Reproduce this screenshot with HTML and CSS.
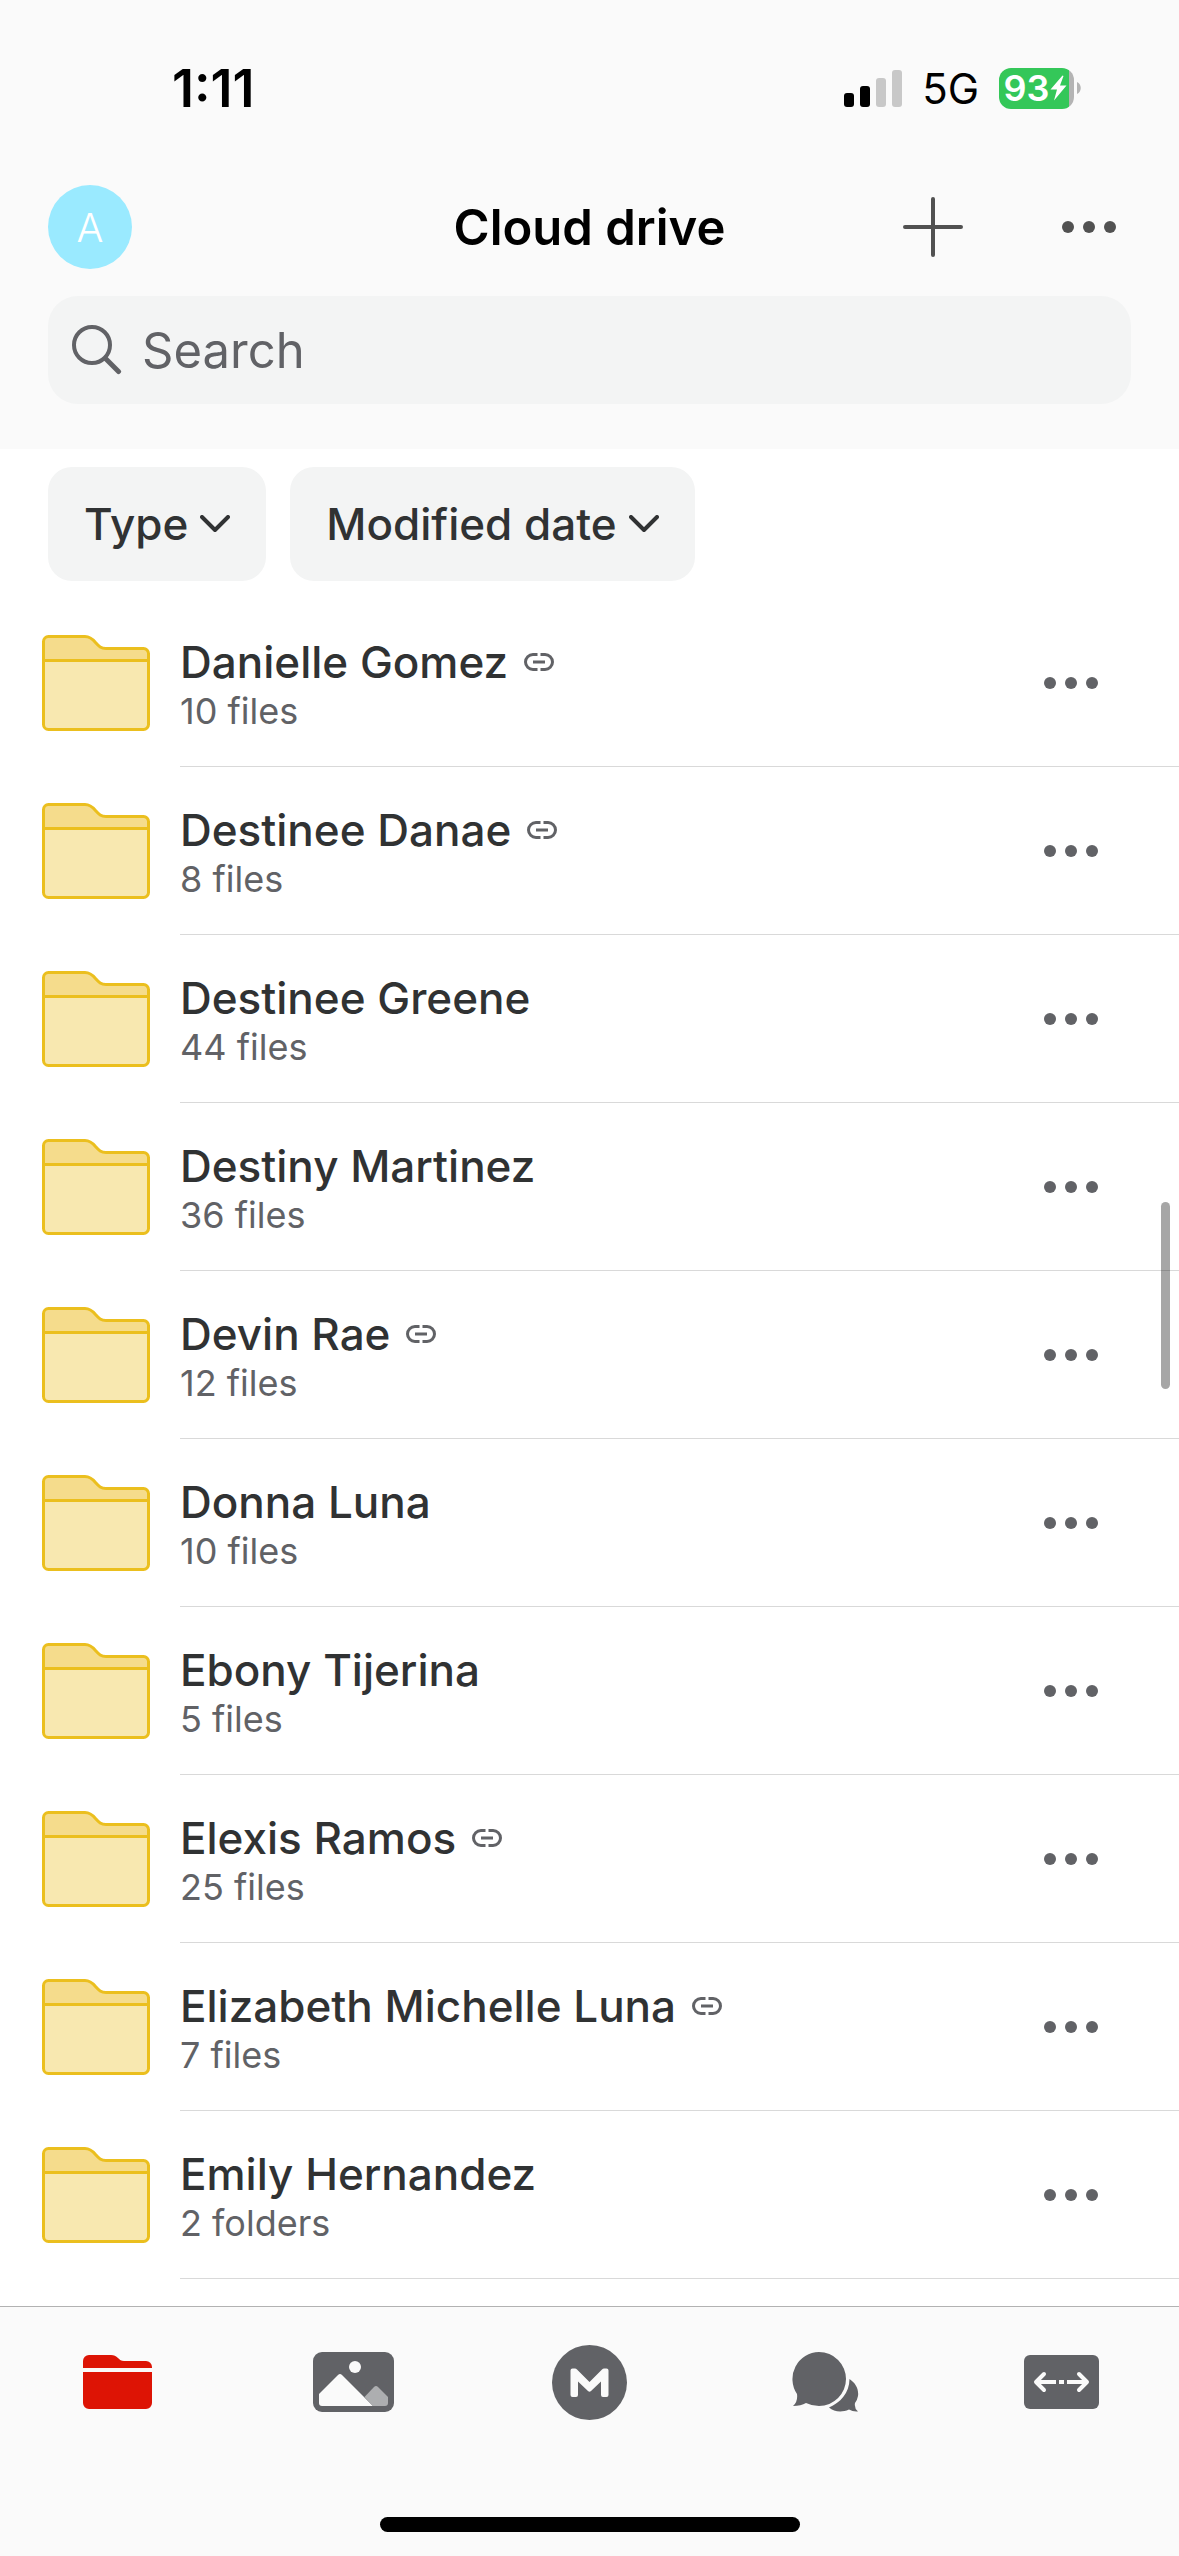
FILE: index.html
```html
<!DOCTYPE html>
<html lang="en">
<head>
<meta charset="utf-8">
<meta name="viewport" content="width=device-width, initial-scale=1">
<title>Cloud drive</title>
<link rel="stylesheet" href="styles.css">
</head>
<body>
<svg class="sprite" aria-hidden="true">
  <symbol id="folder" viewBox="0 0 108 96">
    <path d="M1.500 25.500V6.500a5 5 0 0 1 5-5H43c5 0 8 3 10.500 6C57 11.500 59 13.500 64 13.500h37.500a5 5 0 0 1 5 5v7z" fill="#f5dc8c"/>
    <path d="M1.500 25.500h105V89.500a5 5 0 0 1-5 5h-95a5 5 0 0 1-5-5z" fill="#f8e8b0"/>
    <path d="M1.500 25.500h105M1.500 6.500a5 5 0 0 1 5-5H43c5 0 8 3 10.500 6C57 11.500 59 13.500 64 13.500h37.500a5 5 0 0 1 5 5V89.500a5 5 0 0 1-5 5h-95a5 5 0 0 1-5-5z" fill="none" stroke="#ebbf1e" stroke-width="3"/>
  </symbol>
  <symbol id="link" viewBox="0 0 30 18">
    <path d="M13.500 1.500H9a7.500 7.500 0 0 0 0 15h4.500M16.500 1.500H21a7.500 7.500 0 0 1 0 15h-4.500M9 9h12" fill="none" stroke="#616266" stroke-width="3"/>
  </symbol>
  <symbol id="dots" viewBox="0 0 54 12">
    <circle cx="6" cy="6" r="6"/><circle cx="27" cy="6" r="6"/><circle cx="48" cy="6" r="6"/>
  </symbol>
  <symbol id="chevron" viewBox="0 0 30 18">
    <path d="M2 2l13 13L28 2" fill="none" stroke="#303233" stroke-width="4" stroke-linecap="round" stroke-linejoin="round"/>
  </symbol>
</svg>

<div class="app">
  <header class="header">
    <div class="status">
      <span class="time">1:11</span>
      <div class="status-right">
        <svg class="signal" viewBox="0 0 58 37" aria-label="Signal">
          <rect x="0" y="23" width="10" height="14" rx="3"/>
          <rect x="16" y="16" width="10" height="21" rx="3"/>
          <rect x="32" y="8" width="10" height="29" rx="3" fill="#c8c8c8"/>
          <rect x="48" y="0" width="10" height="37" rx="3" fill="#c8c8c8"/>
        </svg>
        <span class="network">5G</span>
        <div class="battery">
          <div class="battery-body">
            <span>93</span>
            <svg class="bolt" viewBox="0 0 17 26" aria-hidden="true"><path d="M12.500 0.500L0.500 14.500h6.500L4 25.500 16.500 10.500h-6.500L13.500 1z" fill="#fff"/></svg>
          </div>
          <svg class="battery-tip" viewBox="0 0 4 12" aria-hidden="true"><path d="M0 0c5 2 5 10 0 12z" fill="#b4b4b4"/></svg>
        </div>
      </div>
    </div>
    <div class="titlebar">
      <button class="avatar" type="button" aria-label="Account">A</button>
      <h1 class="title">Cloud drive</h1>
      <div class="actions">
        <button class="icon-button" type="button" aria-label="Add">
          <svg class="plus" viewBox="0 0 60 60"><path d="M30 2v56M2 30h56" stroke="#515151" stroke-width="4" stroke-linecap="round"/></svg>
        </button>
        <button class="icon-button" type="button" aria-label="More">
          <svg class="dots dots-dark"><use href="#dots"/></svg>
        </button>
      </div>
    </div>
    <label class="search">
      <svg class="search-icon" viewBox="0 0 50 50" aria-hidden="true">
        <circle cx="20" cy="20" r="18" fill="none" stroke="#616266" stroke-width="4"/>
        <path d="M33.500 33.500L46.500 46.500" stroke="#616266" stroke-width="5" stroke-linecap="round"/>
      </svg>
      <input class="search-input" type="text" placeholder="Search" aria-label="Search">
    </label>
  </header>

  <main class="content">
    <div class="filters">
      <button class="chip" type="button">Type <svg class="chevron"><use href="#chevron"/></svg></button>
      <button class="chip" type="button">Modified date <svg class="chevron"><use href="#chevron"/></svg></button>
    </div>
    <ul class="list">
      <li class="row"><svg class="folder"><use href="#folder"/></svg><div class="row-body"><div class="info"><div class="name">Danielle Gomez <svg class="link"><use href="#link"/></svg></div><div class="meta">10 files</div></div><button class="icon-button" type="button" aria-label="More"><svg class="dots"><use href="#dots"/></svg></button></div></li>
      <li class="row"><svg class="folder"><use href="#folder"/></svg><div class="row-body"><div class="info"><div class="name">Destinee Danae <svg class="link"><use href="#link"/></svg></div><div class="meta">8 files</div></div><button class="icon-button" type="button" aria-label="More"><svg class="dots"><use href="#dots"/></svg></button></div></li>
      <li class="row"><svg class="folder"><use href="#folder"/></svg><div class="row-body"><div class="info"><div class="name">Destinee Greene</div><div class="meta">44 files</div></div><button class="icon-button" type="button" aria-label="More"><svg class="dots"><use href="#dots"/></svg></button></div></li>
      <li class="row"><svg class="folder"><use href="#folder"/></svg><div class="row-body"><div class="info"><div class="name">Destiny Martinez</div><div class="meta">36 files</div></div><button class="icon-button" type="button" aria-label="More"><svg class="dots"><use href="#dots"/></svg></button></div></li>
      <li class="row"><svg class="folder"><use href="#folder"/></svg><div class="row-body"><div class="info"><div class="name">Devin Rae <svg class="link"><use href="#link"/></svg></div><div class="meta">12 files</div></div><button class="icon-button" type="button" aria-label="More"><svg class="dots"><use href="#dots"/></svg></button></div></li>
      <li class="row"><svg class="folder"><use href="#folder"/></svg><div class="row-body"><div class="info"><div class="name">Donna Luna</div><div class="meta">10 files</div></div><button class="icon-button" type="button" aria-label="More"><svg class="dots"><use href="#dots"/></svg></button></div></li>
      <li class="row"><svg class="folder"><use href="#folder"/></svg><div class="row-body"><div class="info"><div class="name">Ebony Tijerina</div><div class="meta">5 files</div></div><button class="icon-button" type="button" aria-label="More"><svg class="dots"><use href="#dots"/></svg></button></div></li>
      <li class="row"><svg class="folder"><use href="#folder"/></svg><div class="row-body"><div class="info"><div class="name">Elexis Ramos <svg class="link"><use href="#link"/></svg></div><div class="meta">25 files</div></div><button class="icon-button" type="button" aria-label="More"><svg class="dots"><use href="#dots"/></svg></button></div></li>
      <li class="row"><svg class="folder"><use href="#folder"/></svg><div class="row-body"><div class="info"><div class="name">Elizabeth Michelle Luna <svg class="link"><use href="#link"/></svg></div><div class="meta">7 files</div></div><button class="icon-button" type="button" aria-label="More"><svg class="dots"><use href="#dots"/></svg></button></div></li>
      <li class="row"><svg class="folder"><use href="#folder"/></svg><div class="row-body"><div class="info"><div class="name">Emily Hernandez</div><div class="meta">2 folders</div></div><button class="icon-button" type="button" aria-label="More"><svg class="dots"><use href="#dots"/></svg></button></div></li>
    </ul>
    <div class="scroll-thumb"></div>
  </main>

  <footer class="footer">
    <nav class="tabs">
      <a class="tab" href="#drive" aria-label="Cloud drive" aria-current="page">
        <svg width="69" height="54" viewBox="0 0 69 54" fill="#dd1405"><path d="M0 13V6a6 6 0 0 1 6-6h22c3 0 5 1 7 3s3 3 6 3h22a6 6 0 0 1 6 6v1zM0 17h69v31a6 6 0 0 1-6 6H6a6 6 0 0 1-6-6z"/></svg>
      </a>
      <a class="tab" href="#photos" aria-label="Photos">
        <svg width="81" height="60" viewBox="0 0 81 60"><rect width="81" height="60" rx="9" fill="#616266"/><circle cx="42" cy="15" r="6" fill="#fafafa"/><path d="M6 42L25 23q2-2 4 0L60 54H9q-3 0-3-3z" fill="#fafafa"/><path d="M51.500 45L61 35q2-2 4 0l10 10v6q0 3-3 3H60z" fill="#adaeb0"/></svg>
      </a>
      <a class="tab" href="#home" aria-label="Home">
        <svg width="75" height="75" viewBox="0 0 75 75"><circle cx="37.500" cy="37.500" r="37.500" fill="#616266"/><path d="M18.500 25.500q0-2 2-2h2.500q1 0 2 1L37.500 37 50 24.500q1-1 2-1h2.500q2 0 2 2V50q0 2-2 2H51q-2 0-2-2V36.500L39 46q-1.500 1.500-3 0L26 36.500V50q0 2-2 2h-3.500q-2 0-2-2z" fill="#fafafa"/></svg>
      </a>
      <a class="tab" href="#chat" aria-label="Chat">
        <svg width="67" height="60" viewBox="0 0 67 60" fill="#616266"><path d="M27 0a27 27 0 1 1 0 54q-7 0-13-3-5 3-13 3 5-4 4-12A27 27 0 0 1 27 0z"/><path d="M57.500 27c6 4 9.500 10 8.500 17q-1 5-3 7-1 5 3 8.500-5 .5-9-2c-8 3.500-15 2-20-2C48 51 57.500 41 57.500 27z"/></svg>
      </a>
      <a class="tab" href="#transfers" aria-label="Transfers">
        <svg width="75" height="54" viewBox="0 0 75 54"><rect width="75" height="54" rx="6" fill="#616266"/><path d="M20 19l-8 8 8 8M55 19l8 8-8 8" fill="none" stroke="#fafafa" stroke-width="4" stroke-linecap="round" stroke-linejoin="round"/><path d="M13 27h19M35 27h5M43 27h19" stroke="#fafafa" stroke-width="4"/></svg>
      </a>
    </nav>
    <div class="home-indicator"></div>
  </footer>
</div>
</body>
</html>
```
FILE: styles.css
```css
* {
  box-sizing: border-box;
}

body {
  margin: 0;
  background: #fff;
  color: #303233;
  font-family: Inter, "Liberation Sans", sans-serif;
}

button,
input {
  margin: 0;
  padding: 0;
  border: 0;
  background: none;
  color: inherit;
  font: inherit;
}

svg {
  display: block;
  flex: none;
}

.sprite {
  position: absolute;
  width: 0;
  height: 0;
}

.app {
  display: flex;
  flex-direction: column;
  min-height: 100vh;
}

/* Header */
.header {
  padding: 0 48px 45px;
  background: #fafafa;
}

.status {
  display: flex;
  align-items: center;
  justify-content: space-between;
  padding: 56px 50px 65px 124px;
  height: 185px;
  color: #000;
}

.time {
  font-size: 52px;
  font-weight: 600;
}

.status-right {
  display: flex;
  align-items: center;
  gap: 20px;
}

.signal {
  width: 58px;
  height: 37px;
}

.network {
  font-size: 42px;
  font-weight: 400;
}

.battery {
  display: flex;
  align-items: center;
  gap: 3px;
}

.battery-body {
  display: flex;
  align-items: center;
  justify-content: center;
  gap: 1px;
  width: 75px;
  height: 41px;
  padding-right: 2px;
  border-radius: 12px;
  background: linear-gradient(to right, #34c759 70px, #b4b4b4 70px);
  color: #fff;
  font-size: 36px;
  font-weight: 600;
}

.bolt {
  width: 17px;
  height: 26px;
}

.battery-tip {
  width: 4px;
  height: 12px;
}

.titlebar {
  display: grid;
  grid-template-columns: 1fr auto 1fr;
  align-items: center;
  height: 84px;
}

.avatar {
  width: 84px;
  height: 84px;
  border-radius: 50%;
  background: #9aeaff;
  color: #fff;
  font-size: 40px;
  font-weight: 300;
}

.title {
  margin: 0;
  color: #000;
  font-size: 49px;
  font-weight: 600;
}

.actions {
  display: flex;
  justify-content: flex-end;
  gap: 72px;
}

.icon-button {
  display: flex;
  align-items: center;
  justify-content: center;
  width: 84px;
  height: 84px;
}

.plus {
  width: 60px;
  height: 60px;
}

.dots {
  width: 54px;
  height: 12px;
  fill: #616266;
}

.dots-dark {
  fill: #515151;
}

.search {
  display: flex;
  align-items: center;
  gap: 20px;
  height: 108px;
  margin-top: 27px;
  padding: 0 24px;
  border-radius: 30px;
  background: #f3f4f4;
}

.search-icon {
  width: 50px;
  height: 50px;
}

.search-input {
  flex: 1;
  min-width: 0;
  font-size: 49px;
  outline: none;
}

.search-input::placeholder {
  color: #616266;
  opacity: 1;
}

/* Folder list */
.content {
  position: relative;
  flex: 1;
  padding-bottom: 27px;
}

.filters {
  display: flex;
  gap: 24px;
  padding: 18px 48px;
}

.chip {
  display: flex;
  align-items: center;
  gap: 12px;
  height: 114px;
  padding: 0 36px;
  border-radius: 24px;
  background: #f3f4f4;
  font-size: 44px;
  font-weight: 500;
}

.chevron {
  width: 30px;
  height: 18px;
}

.list {
  margin: 0;
  padding: 0;
  list-style: none;
}

.row {
  display: flex;
  align-items: center;
  gap: 30px;
  padding-left: 42px;
}

.folder {
  width: 108px;
  height: 96px;
}

.row-body {
  display: flex;
  flex: 1;
  align-items: center;
  justify-content: space-between;
  height: 168px;
  padding-right: 66px;
  border-bottom: 1px solid #d9d9d9;
}

.name {
  display: flex;
  align-items: center;
  gap: 16px;
  font-size: 44px;
  font-weight: 500;
  line-height: 56px;
}

.link {
  width: 30px;
  height: 18px;
}

.meta {
  color: #616266;
  font-size: 36px;
  line-height: 42px;
}

.scroll-thumb {
  position: absolute;
  top: 753px;
  right: 9px;
  width: 9px;
  height: 187px;
  border-radius: 5px;
  background: rgba(0, 0, 0, 0.35);
}

/* Tab bar */
.footer {
  padding-bottom: 24px;
  border-top: 1px solid #b2b2b2;
  background: #fafafa;
}

.tabs {
  display: grid;
  grid-template-columns: repeat(5, 1fr);
  height: 150px;
}

.tab {
  display: flex;
  align-items: center;
  justify-content: center;
}

.home-indicator {
  width: 420px;
  height: 15px;
  margin: 60px auto 0;
  border-radius: 8px;
  background: #000;
}
```
